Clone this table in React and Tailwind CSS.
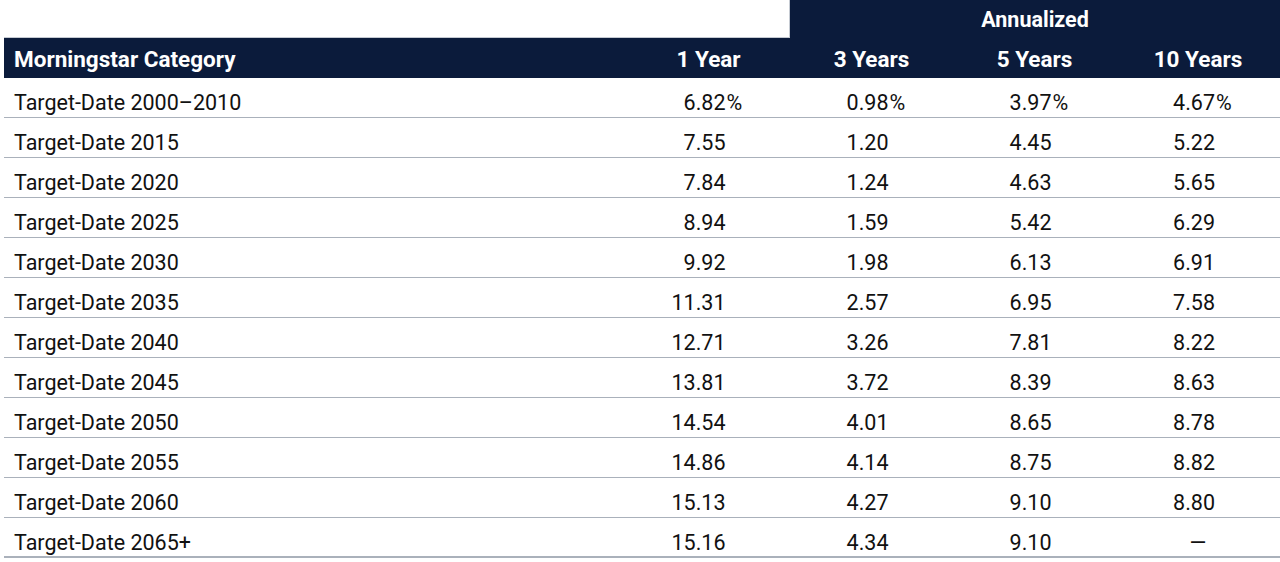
import React from 'react'

const ROWS = [
  ['Target-Date 2000–2010', '6.82', '0.98', '3.97', '4.67', true],
  ['Target-Date 2015', '7.55', '1.20', '4.45', '5.22'],
  ['Target-Date 2020', '7.84', '1.24', '4.63', '5.65'],
  ['Target-Date 2025', '8.94', '1.59', '5.42', '6.29'],
  ['Target-Date 2030', '9.92', '1.98', '6.13', '6.91'],
  ['Target-Date 2035', '11.31', '2.57', '6.95', '7.58'],
  ['Target-Date 2040', '12.71', '3.26', '7.81', '8.22'],
  ['Target-Date 2045', '13.81', '3.72', '8.39', '8.63'],
  ['Target-Date 2050', '14.54', '4.01', '8.65', '8.78'],
  ['Target-Date 2055', '14.86', '4.14', '8.75', '8.82'],
  ['Target-Date 2060', '15.13', '4.27', '9.10', '8.80'],
  ['Target-Date 2065+', '15.16', '4.34', '9.10', null],
]

const GRID = 'grid grid-cols-[623px_163px_163px_163px_164px]'

function NumCell({ value, pct }) {
  if (value === null) {
    return <div className="flex justify-center">—</div>
  }
  return (
    <div className="flex justify-center">
      <span className="w-[55px] text-right">{value}</span>
      <span className="w-[21px] text-left pl-[1px]">{pct ? '%' : ''}</span>
    </div>
  )
}

export default function App() {
  return (
    <div className="bg-white w-[1280px] h-[562px] pl-[4px] font-['Roboto',sans-serif] text-[21.5px] text-[#111]">
      <div className={`${GRID} h-[38px]`}>
        <div className="col-span-2 border-b border-r border-[#c5cad2]" />
        <div className="col-span-3 bg-[#0b1b3b] text-white font-bold flex items-center justify-center pt-[3px]">
          Annualized
        </div>
      </div>
      <div className={`${GRID} h-[40px] bg-[#0b1b3b] text-white font-bold items-center pt-[4px] text-[22.5px]`}>
        <div className="pl-[10px]">Morningstar Category</div>
        <div className="text-center">1 Year</div>
        <div className="text-center">3 Years</div>
        <div className="text-center">5 Years</div>
        <div className="text-center">10 Years</div>
      </div>
      {ROWS.map((r, i) => (
        <div
          key={r[0]}
          className={`${GRID} h-[40px] items-center pt-[9px] border-b ${i === ROWS.length - 1 ? 'border-b-2' : ''} border-[#aab1bb]`}
        >
          <div className="pl-[10px]">{r[0]}</div>
          <NumCell value={r[1]} pct={r[5]} />
          <NumCell value={r[2]} pct={r[5]} />
          <NumCell value={r[3]} pct={r[5]} />
          <NumCell value={r[4]} pct={r[5]} />
        </div>
      ))}
    </div>
  )
}
